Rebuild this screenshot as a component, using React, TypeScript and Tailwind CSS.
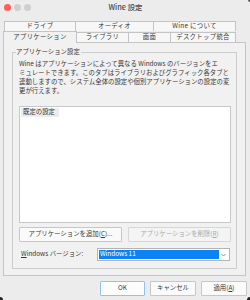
import React from 'react'

const FONT = { fontFamily: '"Noto Sans CJK JP", "Noto Sans", sans-serif' }

const ROW1 = [
  { label: 'ドライブ', w: 'w-[72px]' },
  { label: 'オーディオ', w: 'w-[79px]' },
  { label: 'Wine について', w: 'w-[83px]' },
]

const ROW2 = [
  { label: 'ライブラリ', w: 'w-[53px]' },
  { label: '画面', w: 'w-[43px]' },
  { label: 'デスクトップ統合', w: 'w-[66px]' },
]

const DESC = [
  'Wine はアプリケーションによって異なる Windows のバージョンをエ',
  'ミュレートできます。このタブはライブラリおよびグラフィック各タブと',
  '連動しますので、システム全体の設定や個別アプリケーションの設定の変',
  '更が行えます。',
]

export default function App() {
  return (
    <div className="relative w-[250px] h-[300px] overflow-hidden bg-[#ececec] text-[#383838] text-[6.4px] leading-none" style={FONT}>
      {/* title bar */}
      <div className="relative h-[14px] flex items-center pl-[4px] gap-[3px]">
        <span className="w-[7px] h-[7px] rounded-full bg-[#fe5f57]" />
        <span className="w-[7px] h-[7px] rounded-full bg-[#cfcfcf]" />
        <span className="w-[7px] h-[7px] rounded-full bg-[#cfcfcf]" />
        <div className="absolute inset-0 flex items-center justify-center text-[7.4px] font-medium text-[#4a4a4a] pl-[1px]">Wine 設定</div>
      </div>

      <div className="pt-[7px] px-[3px]">
        {/* tabs */}
        <div className="flex ml-[1px] h-[10px]">
          {ROW1.map(t => (
            <div key={t.label} className={`${t.w} -ml-px first:ml-0 border border-[#c4c4c4] border-b-0 bg-[#f7f7f7] flex items-center justify-center tracking-[0.3px]`}>
              {t.label}
            </div>
          ))}
        </div>
        <div className="flex items-end h-[12px] relative z-10">
          <div className="w-[74px] h-[12px] border border-[#c4c4c4] border-b-0 bg-[#f1f1f1] flex items-center justify-center pb-[1px] tracking-[0.3px]">
            アプリケーション
          </div>
          {ROW2.map(t => (
            <div key={t.label} className={`${t.w} h-[11px] -ml-px border border-[#c4c4c4] bg-[#f7f7f7] flex items-center justify-center tracking-[0.3px]`}>
              {t.label}
            </div>
          ))}
        </div>

        {/* panel */}
        <div className="w-[243px] h-[234px] -mt-px border border-[#c4c4c4] bg-[#f1f1f1] pt-[9px] px-[8px]">
          <div className="relative h-[217px] border border-[#cdcdcd] pt-[7px] pl-[6px] pr-[5px]">
            <span className="absolute -top-[4px] left-[3px] bg-[#f1f1f1] pr-[1px]">アプリケーション設定</span>
            <div className="flex flex-col">
              {DESC.map(l => (
                <div key={l} className="h-[9px] whitespace-nowrap flex items-center">{l}</div>
              ))}
            </div>
            <div className="mt-[10px] h-[117px] border border-[#c8c8c8] bg-white p-px">
              <div className="w-[38px] h-[9px] bg-[#ececec] flex items-center pl-[2px]">既定の設定</div>
            </div>
            <div className="flex gap-[6px] mt-[4px]">
              <div className="w-[103px] h-[15px] border border-[#c6c6c6] bg-[#fafafa] rounded-[1px] flex items-center justify-center">
                アプリケーションを追加(<span className="underline">C</span>)...
              </div>
              <div className="w-[103px] h-[15px] border border-[#d6d6d6] bg-[#f4f4f4] rounded-[1px] flex items-center justify-center text-[#a9a9a9]">
                アプリケーションを削除(<span className="underline">R</span>)
              </div>
            </div>
            <div className="flex items-center mt-[6px]">
              <span className="w-[78px] pl-[2px]"><span className="underline">W</span>indows バージョン:</span>
              <div className="w-[133px] h-[13px] border border-[#b4b4b4] bg-white flex p-px">
                <div className="flex-1 bg-[#0b83f6] text-white flex items-center pl-[1px]">Windows 11</div>
                <div className="w-[9px] flex items-center justify-center">
                  <svg width="5" height="4" viewBox="0 0 5 4"><path d="M0.5 1L2.5 3L4.5 1" fill="none" stroke="#777" strokeWidth="0.8" /></svg>
                </div>
              </div>
            </div>
          </div>
        </div>

        {/* dialog buttons */}
        <div className="flex justify-end gap-[5px] mt-[5px]">
          <div className="w-[45px] h-[15px] border border-[#8ec3f3] bg-[#fcfcfc] rounded-[1px] flex items-center justify-center">OK</div>
          <div className="w-[46px] h-[15px] border border-[#c6c6c6] bg-[#fafafa] rounded-[1px] flex items-center justify-center">キャンセル</div>
          <div className="w-[46px] h-[15px] border border-[#c6c6c6] bg-[#fafafa] rounded-[1px] flex items-center justify-center">
            適用(<span className="underline">A</span>)
          </div>
        </div>
      </div>

      {/* window corners */}
      <span className="absolute left-0 bottom-0 w-[3px] h-[3px] bg-[#222] rounded-tr-full" />
      <span className="absolute right-0 bottom-0 w-[3px] h-[3px] bg-[#222] rounded-tl-full" />
      <span className="absolute right-0 top-0 w-[2px] h-[2px] bg-[#555] rounded-bl-full" />
    </div>
  )
}
